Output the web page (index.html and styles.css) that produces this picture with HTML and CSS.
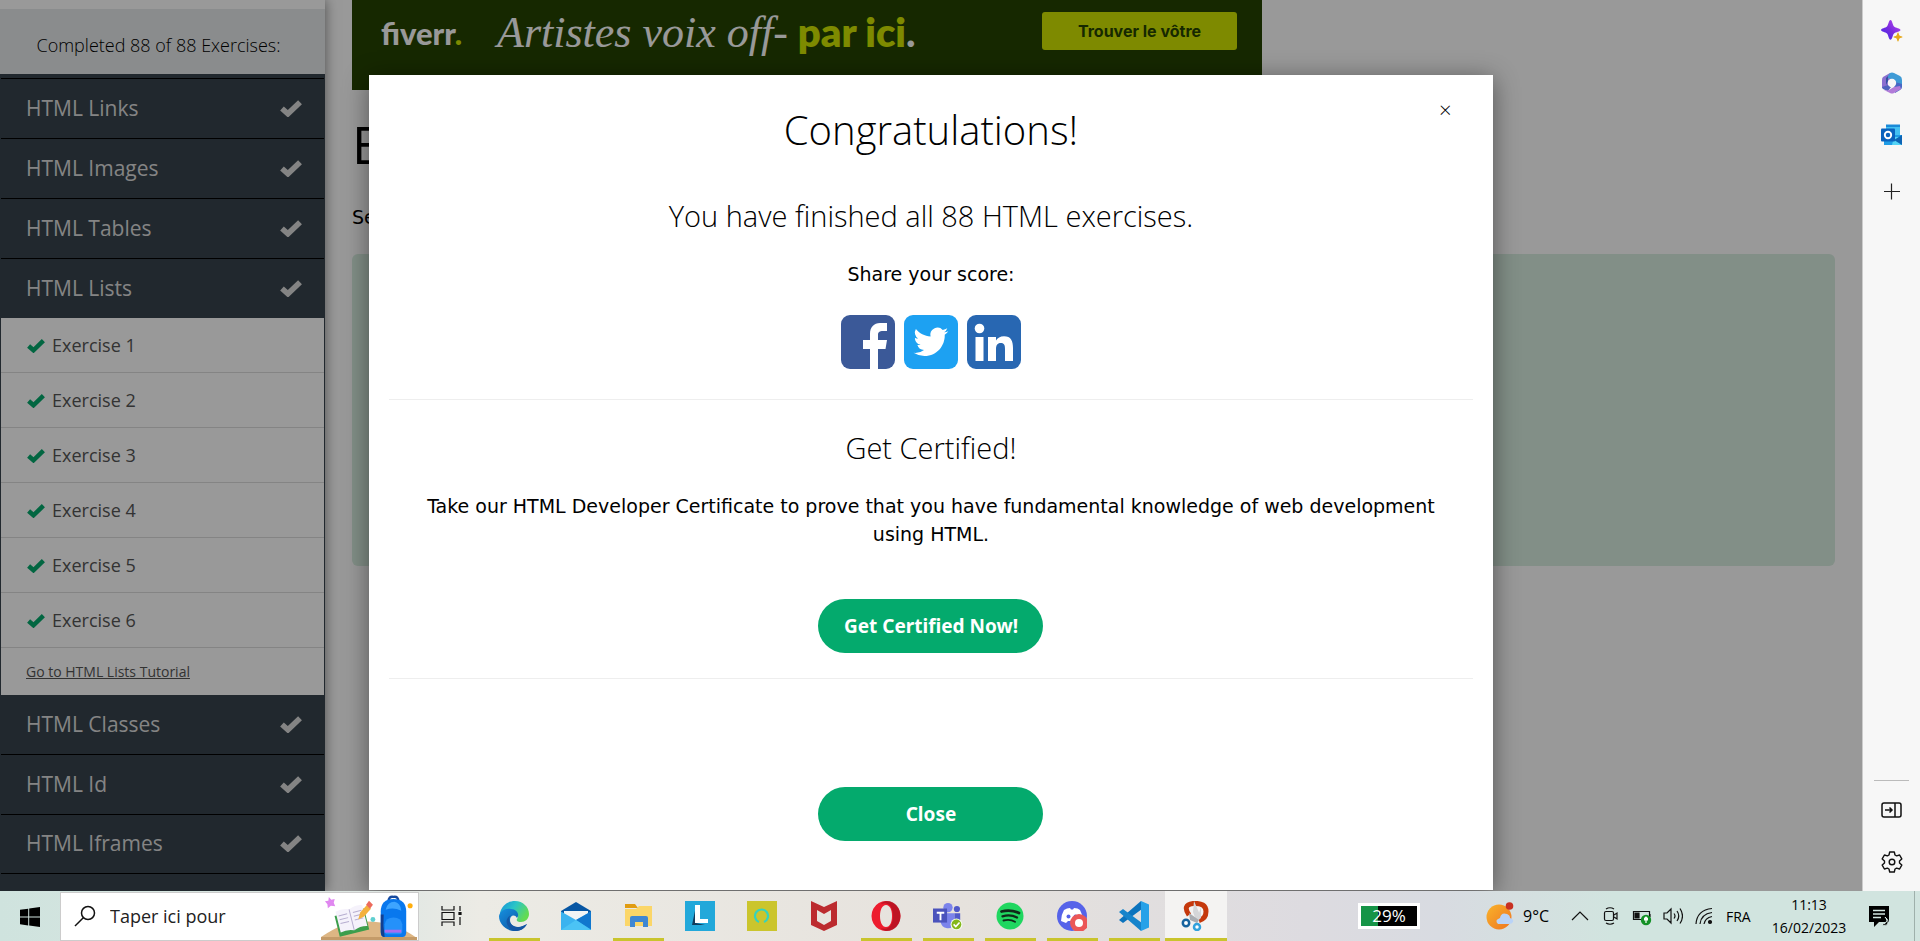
FILE: index.html
```html
<!DOCTYPE html>
<html lang="en">
<head>
<meta charset="utf-8">
<title>HTML Exercises</title>
<link rel="stylesheet" href="styles.css">
</head>
<body>
<svg class="defs" aria-hidden="true">
  <symbol id="check" viewBox="0 0 20 16"><path d="M1.800 8.500 7.200 13.300 18.200 2.700" fill="none" stroke="currentColor" stroke-width="5"/></symbol>
</svg>
<div class="browser">
  <div class="site">
    <nav class="sidebar">
      <p class="progress">Completed 88 of 88 Exercises:</p>
      <div class="topics">
        <button class="topic">HTML Links<svg class="tick"><use href="#check"/></svg></button>
        <button class="topic">HTML Images<svg class="tick"><use href="#check"/></svg></button>
        <button class="topic">HTML Tables<svg class="tick"><use href="#check"/></svg></button>
        <button class="topic">HTML Lists<svg class="tick"><use href="#check"/></svg></button>
        <div class="exercises">
          <a class="exercise" href="#"><svg class="done"><use href="#check"/></svg>Exercise 1</a>
          <a class="exercise" href="#"><svg class="done"><use href="#check"/></svg>Exercise 2</a>
          <a class="exercise" href="#"><svg class="done"><use href="#check"/></svg>Exercise 3</a>
          <a class="exercise" href="#"><svg class="done"><use href="#check"/></svg>Exercise 4</a>
          <a class="exercise" href="#"><svg class="done"><use href="#check"/></svg>Exercise 5</a>
          <a class="exercise" href="#"><svg class="done"><use href="#check"/></svg>Exercise 6</a>
          <a class="tutorial" href="#">Go to HTML Lists Tutorial</a>
        </div>
        <button class="topic">HTML Classes<svg class="tick"><use href="#check"/></svg></button>
        <button class="topic">HTML Id<svg class="tick"><use href="#check"/></svg></button>
        <button class="topic">HTML Iframes<svg class="tick"><use href="#check"/></svg></button>
      </div>
    </nav>
    <main class="content">
      <div class="ad">
        <span class="ad-logo">fiverr<b>.</b></span>
        <span class="ad-line"><i>Artistes voix off-</i><strong>par ici<b>.</b></strong></span>
        <button class="ad-button">Trouver le vôtre</button>
      </div>
      <h1 class="page-title">E</h1>
      <p class="intro">Se</p>
      <div class="panel"></div>
    </main>
    <div class="overlay">
      <section class="modal" role="dialog" aria-labelledby="dialog-title">
        <button class="dismiss" aria-label="Dismiss">×</button>
        <h2 class="modal-title" id="dialog-title">Congratulations!</h2>
        <h3 class="modal-subtitle">You have finished all 88 HTML exercises.</h3>
        <p class="modal-text">Share your score:</p>
        <div class="share">
          <a href="#" aria-label="Facebook"><svg viewBox="0 0 54 54"><rect width="54" height="54" rx="9" fill="#3b5998"/><path d="M29 54V34h-7v-9h7v-6c0-7 4-11 10-11h7v8h-4c-3.500 0-5 1-5 4v5h9l-1.500 9H37v20z" fill="#fff"/></svg></a>
          <a href="#" aria-label="Twitter"><svg viewBox="0 0 54 54"><rect width="54" height="54" rx="9" fill="#1da1f2"/><path transform="translate(9.500 9.500) scale(1.450)" fill="#fff" d="M23.950 4.570a10 10 0 0 1-2.820.77 4.960 4.960 0 0 0 2.160-2.720c-.95.55-2 .96-3.130 1.180a4.920 4.920 0 0 0-8.380 4.480C7.690 8.090 4.070 6.130 1.640 3.160a4.920 4.920 0 0 0 1.520 6.570 4.900 4.900 0 0 1-2.230-.61v.06a4.920 4.920 0 0 0 3.950 4.830 5 5 0 0 1-2.210.08 4.940 4.940 0 0 0 4.600 3.420A9.870 9.870 0 0 1 0 19.540a13.990 13.990 0 0 0 7.550 2.210c9.050 0 14-7.500 14-13.980 0-.21 0-.42-.02-.63a9.940 9.940 0 0 0 2.460-2.550z"/></svg></a>
          <a href="#" aria-label="LinkedIn"><svg viewBox="0 0 54 54"><rect width="54" height="54" rx="9" fill="#2867b2"/><g fill="#fff"><circle cx="12.500" cy="13.500" r="4.800"/><path d="M8.500 22h8v24h-8zM21 22h8v3.500c1.500-2.500 4.200-4.200 8-4.200 7 0 9 4.700 9 11.700v13h-8V34c0-3.500-.6-6-4.200-6-3.600 0-4.800 2.600-4.800 6v12h-8z"/></g></svg></a>
        </div>
        <hr class="rule">
        <h3 class="modal-subtitle certified-title">Get Certified!</h3>
        <p class="modal-text">Take our HTML Developer Certificate to prove that you have fundamental knowledge of web development using HTML.</p>
        <button class="pill certify">Get Certified Now!</button>
        <hr class="rule second">
        <button class="pill close">Close</button>
      </section>
    </div>
  </div>
  <aside class="rail">
    <button class="rail-button" aria-label="Discover"><svg viewBox="0 0 24 24"><defs><linearGradient id="star" x1="0" x2="1" y1="1" y2="0"><stop stop-color="#3c2be8"/><stop offset=".5" stop-color="#7a2bdf"/><stop offset="1" stop-color="#c04cf0"/></linearGradient></defs><path fill="url(#star)" d="M10.500 1c1.800 0 2 5 3.500 6.500s6.500 1.700 6.500 3.500-5 2-6.500 3.500-1.700 6.300-3.500 6.300-2-4.800-3.500-6.300S1 12.800 1 11s4.500-2 6-3.500S8.700 1 10.500 1z"/><path fill="#e6a91c" d="M18 13.500c.8 0 .8 2.300 1.500 3s3 .7 3 1.500-2.300.8-3 1.500-.7 3-1.500 3-.8-2.300-1.500-3-3-.7-3-1.500 2.300-.8 3-1.500.7-3 1.500-3z"/></svg></button>
    <button class="rail-button" aria-label="Microsoft 365"><svg viewBox="0 0 24 24"><path fill="#8a6fd0" d="M10 2 3 6Q2 7 2 9v8l6 3V10l5-4z"/><path fill="#3f9bd6" d="M10 2q2-1 4 0l6 3q2 1 2 4v7l-6-4-5-4-3-1V5z"/><path fill="#3552a0" d="M8 10V5L6 7v7z"/><path fill="#4867c4" d="m15 11 7 2v3q0 2-2 3l-5 3-1-6z"/><path fill="#4f63bd" d="m2 16 6-2 3 2-3 4-5-2z"/><path fill="#b17bd8" d="m4 19 4 .5L14 16l6-1 1 3-7 4q-2 1-4 0z"/><circle cx="12" cy="12" r="4.200" fill="#f7f7f7"/></svg></button>
    <button class="rail-button" aria-label="Outlook"><svg viewBox="0 0 24 24"><path fill="#1a8ad8" d="M6 1.500h14V5H6z"/><path fill="#43c0f2" d="M6 4h14v10H6z"/><path fill="#1f9ce6" d="M4 12h18v10H4z"/><path fill="#54d4f6" d="M14 14h8v8H12z"/><path fill="#0c64b5" d="m22 12-8 5 8 5z"/><rect x="1" y="5.500" width="14" height="13" rx="1" fill="#0a62bd"/><circle cx="8" cy="12" r="3.200" fill="none" stroke="#fff" stroke-width="1.900"/></svg></button>
    <button class="rail-button rail-add" aria-label="Add"><svg viewBox="0 0 24 24"><path d="M4 12.500h16M11.500 4.500v16" stroke="#222" stroke-width="1.200"/></svg></button>
    <div class="rail-foot">
      <button class="rail-button" aria-label="Hide sidebar"><svg viewBox="0 0 24 24" fill="none" stroke="#111" stroke-width="1.500"><rect x="2" y="5" width="19" height="14" rx="2"/><path d="M15 5v14M5 12h7M9.500 9.500 12 12l-2.500 2.500"/></svg></button>
      <button class="rail-button" aria-label="Settings"><svg viewBox="0 0 24 24" fill="none" stroke="#111" stroke-width="1.400" stroke-linejoin="round"><circle cx="12" cy="12" r="2.800"/><path d="m9.700 2 4.600 0 .7 3 1.600.9 3-.9 2.200 3.900-2.300 2.100v2l2.300 2.100-2.200 3.900-3-.9-1.600.9-.7 3H9.700L9 19l-1.600-.9-3 .9-2.200-3.900L4.500 13v-2L2.200 8.900 4.400 5l3 .9L9 5z"/></svg></button>
    </div>
  </aside>
</div>
<footer class="taskbar">
  <button class="start" aria-label="Start"><svg viewBox="0 0 20 20"><path d="M0 2.800 8.200 1.700V9.600H0zM9.200 1.500 20 0v9.600H9.200zM0 10.500h8.200v8L0 17.300zM9.200 10.500H20V20L9.200 18.600z"/></svg></button>
  <label class="search">
    <svg class="lens" viewBox="0 0 22 22" fill="none" stroke="#111" stroke-width="1.500"><circle cx="14" cy="8" r="6.500"/><path d="M9.300 12.700 1 21"/></svg>
    <input type="text" value="Taper ici pour" aria-label="Search">
    <svg class="school" viewBox="0 0 98 48"><path fill="#ddb684" d="M0 45C18 33 28 29 47 29s34 5 51 17v2H0z"/><path fill="#c49b69" d="M0 45h98v3H0z"/><path fill="#e088f0" d="m8 4 2.500 3L14 6l-1 4 1.500 3.500L10 13l-3 2.500-.5-4L4 8.500 7.500 8z"/><g transform="rotate(-14 33 30)"><path fill="#3c9e4c" d="M16 19h31v22H16z"/><path fill="#f5f2fb" d="M18 15q7-2 14 1 7-3 14-1v22q-7-2-14 1-7-3-14-1z"/><path stroke="#b7aed0" stroke-width="1" fill="none" d="M32 16v22M20 20h9M20 24h9M20 28h9M35 20h9M35 24h9M35 28h9"/></g><path fill="#f4b13c" d="m38 27 2-7 7-8 4 4-7 8z"/><path fill="#ec6a5c" d="m46 12 3-4 4 4-3 4z"/><circle cx="53" cy="27" r="2.500" fill="#5fcfd0"/><circle cx="91" cy="13" r="2.600" fill="#ffae0d"/><path fill="none" stroke="#174a9e" stroke-width="2.500" d="M69 9q0-6 5-5 5-1 5 5"/><path fill="#0878ee" d="M61 19q0-13 13-13t13 13v21q0 5-4 5H65q-4 0-4-5z"/><path fill="#123f91" d="M61 22v17q0 6 4 6-2-12-1-23z"/><path fill="#3da5ff" d="M66 17q2-8 9-8 6 1 7 9-8-4-16-1z"/><path fill="#2591fa" d="M65 32q1-7 9-7t9 7v7q0 3-3 3H68q-3 0-3-3z"/><path stroke="#a86df1" stroke-width="3" d="M65 39h17"/></svg>
  </label>
  <button class="app task-view" aria-label="Task view"><svg viewBox="0 0 22 22" fill="none" stroke="#111" stroke-width="1.200"><path d="M2 1v4h12V1M2 21v-4h12v4M2 7.500h12v7H2zM20 1v5M20 12v8"/><path fill="#111" d="M19 7.500h2v2h-2z"/></svg></button>
  <button class="app open" aria-label="Edge"><svg viewBox="0 0 30 30"><defs><linearGradient id="e1" x1="0" y1="0" x2="1" y2=".5"><stop stop-color="#158fdc"/><stop offset=".5" stop-color="#2bc5c7"/><stop offset="1" stop-color="#63db52"/></linearGradient><linearGradient id="e2" x1="0" y1="0" x2="1" y2="1"><stop stop-color="#1690df"/><stop offset="1" stop-color="#0b4b99"/></linearGradient></defs><path fill="url(#e1)" d="M1 12C3 4 9 0 16 0c8 0 14 6 14 13 0 5-4 8-8 8-3 0-5-1-4-3 2-2 0-7-5-7-5-1-9 0-12 4z"/><path fill="url(#e2)" d="M0 15c1-5 6-8 12-7 6 0 9 6 6 9-2-4-7-3-7 2s5 8 10 7c3-1 5-2 7-3-3 5-7 7-12 7C7 30 0 23 0 15z"/><path fill="#1456a4" d="M12 14c-4 4-1 12 7 12 4 0 7-2 9-3-4 7-10 8-15 6-6-4-8-11-1-15z"/></svg></button>
  <button class="app" aria-label="Mail"><svg viewBox="0 0 30 30"><path fill="#0756a3" d="M0 10 15 1l15 9v5H0z"/><path fill="#f1f4f5" d="M3 10h24v6L15 20 3 16z"/><path fill="#3bb3ef" d="M0 10.500 15 19l15-8.500V29H0z"/><path fill="#1177ce" d="M30 10.500v18L15 19z"/><path fill="#4bc3f5" d="m0 29 15-10 15 10z"/></svg></button>
  <button class="app open" aria-label="Files"><svg viewBox="0 0 30 30"><path fill="#e19c11" d="M2 3h10l3 4H2z"/><path fill="#fbd668" d="M2 8h11l3-3h13v20H2z"/><path fill="#3f87d2" d="M7 26V17q0-2 2-2h14q2 0 2 2v9h-5v-5h-8v5z"/></svg></button>
  <button class="app" aria-label="Lingvo"><svg viewBox="0 0 30 30"><path fill="#22a8da" d="M0 0h30v30H0z"/><path fill="#123b5c" d="m11 5-4 19h13l-9-2z"/><path fill="#fff" d="M10 4h5v14h8v4H10z"/></svg></button>
  <button class="app" aria-label="Alexa"><svg viewBox="0 0 30 30"><path fill="#cbc52d" d="M0 0h30v30H0z"/><path d="M12 21a6.500 6.500 0 1 1 5 0" fill="none" stroke="#35d3bd" stroke-width="2.200"/></svg></button>
  <button class="app" aria-label="McAfee"><svg viewBox="0 0 30 30"><path fill="#bc2b2f" fill-rule="evenodd" d="m2 0 13 6L28 0v24l-13 6-13-6zm6 9v11l7 4 7-4V9l-7 4z"/></svg></button>
  <button class="app open" aria-label="Opera"><svg viewBox="0 0 30 30"><path fill="#ed1c2e" fill-rule="evenodd" d="M15 0a14.500 15 0 1 0 .01 0zm0 4c4 0 6 5 6 11s-2 11-6 11-6-5-6-11 2-11 6-11z"/><path fill="#a90f1f" d="M10 3q2-3 6-3c8 0 13.500 7 13.500 15S24 30 16 30q-4 0-6-3 2 1 4 .800c5-.5 8-5.500 8-12.800S19 2.700 14 2.200q-2 0-4 .8z" opacity=".7"/></svg></button>
  <button class="app open" aria-label="Teams"><svg viewBox="0 0 32 30"><circle cx="16" cy="6" r="5" fill="#7b83eb"/><circle cx="25.500" cy="7.500" r="3.300" fill="#5059c9"/><path fill="#7b83eb" d="M8 12h15v10q-2 7-8 6-6-1-7-7z"/><path fill="#5059c9" d="M23 12h6v10q-2 4-6 2z"/><path fill="#4b53bc" d="M0 7h15v15H0z"/><path fill="#fff" d="M4 10.500h8v2H9v7H7v-7H4z"/><circle cx="25" cy="24" r="6.300" fill="#f6fff0"/><circle cx="25" cy="24" r="5.200" fill="#84b71b"/><path d="m22 24 2.300 2.300 4-4.300" fill="none" stroke="#fff" stroke-width="1.700"/></svg></button>
  <button class="app open" aria-label="Spotify"><svg viewBox="0 0 30 30"><circle cx="15" cy="15" r="13.500" fill="#20d760"/><g fill="none" stroke="#10291a" stroke-linecap="round"><path d="M6.500 10.500q9-2.500 17.500 1.500" stroke-width="2.800"/><path d="M7.500 15.300q8-2.200 14.500 1.200" stroke-width="2.300"/><path d="M8.500 19.500q6.500-1.700 11.500 1.200" stroke-width="1.900"/></g></svg></button>
  <button class="app open" aria-label="Discord"><svg viewBox="0 0 30 30"><circle cx="15" cy="15" r="15" fill="#5663e9"/><path fill="#fff" d="M7 9q3-2 6-2l1 1.500h2L17 7q4 0 6 2 3 5 3 11l-5 2-2-2h-8l-2 2-5-2q0-6 3-11z"/><circle cx="11.500" cy="15.500" r="2" fill="#5663e9"/><circle cx="18.500" cy="15.500" r="2" fill="#5663e9"/><circle cx="22" cy="22" r="9" fill="#eb5757"/><circle cx="22" cy="22" r="4" fill="#fff"/></svg></button>
  <button class="app open" aria-label="Code"><svg viewBox="0 0 30 30"><path fill="#0b73bd" d="m22 0 1 8L4 22l-4-3z"/><path fill="#1684cb" d="m0 11 4-3 19 14-1 8z"/><path fill="#26a1e8" d="m22 0 8 3.500v23L22 30z"/></svg></button>
  <button class="app open active" aria-label="Snipping Tool"><svg viewBox="0 0 30 30"><path d="M8 14Q1 4 12 2.500q13-1 13 8 0 7-7 9" fill="none" stroke="#c5380c" stroke-width="5"/><path fill="#d5d6d8" d="m13 0 7 16-4 6-4-11zM20 6v11l-5 4z"/><path fill="#a9adb2" d="m8 12 10 7-2 3-7-3z"/><circle cx="5" cy="22" r="3.200" fill="#fff" stroke="#17639e" stroke-width="2.500"/><circle cx="16" cy="26" r="3" fill="#fff" stroke="#31a1dc" stroke-width="2.500"/></svg></button>
  <div class="tray">
    <span class="battery"><span class="gauge">29%</span></span>
    <svg class="weather" viewBox="0 0 28 28"><defs><linearGradient id="sun" x1="0" x2="1" y1="0" y2="1"><stop stop-color="#f9b32a"/><stop offset="1" stop-color="#ee7523"/></linearGradient></defs><circle cx="13" cy="15" r="12.500" fill="url(#sun)"/><path fill="#b9d3f7" d="M12 22q-4-4 2-6 1-6 7-4 3 1 3 4 4 1 3 4-1 2-4 2z"/><circle cx="23.500" cy="4" r="3.800" fill="#c83022"/></svg>
    <span class="degrees">9°C</span>
    <svg class="mark chevron" viewBox="0 0 20 20"><path d="m2 14 8-8 8 8"/></svg>
    <svg class="mark meet" viewBox="0 0 20 20"><rect x="3.500" y="5.500" width="9" height="9" rx="1.500"/><path d="m13 9 3-2v6l-3-2M5 3q4-2.500 8 0M5 17q4 2.500 8 0"/></svg>
    <svg class="mark power" viewBox="0 0 20 20"><path d="M1.500 5.500h16v8h-16zM18 8v3"/><path fill="#111" d="M3 7h4v5H3z"/><circle cx="14" cy="14" r="5.200" fill="#139126" stroke="none"/><path d="M14 17v-3m-1.500 0q-.5-2 1.500-3 2 1 1.500 3z" fill="#fff" stroke="#fff"/></svg>
    <svg class="mark sound" viewBox="0 0 20 20"><path d="M1 7h3l4-4v14l-4-4H1zM11 7.500q2 2.500 0 5M14 5q3.500 5 0 10M17 2.500q5 7.500 0 15"/></svg>
    <svg class="mark wifi" viewBox="0 0 20 20"><path d="M2 18Q3 4 18 2.500M6 18Q7 8 18 6.500M10 18q1-6 8-7.500"/><circle cx="16" cy="16" r="1.500" fill="#111"/></svg>
    <span class="language">FRA</span>
    <time class="clock">11:13<br>16/02/2023</time>
    <svg class="notes" viewBox="0 0 20 21"><path fill="#000" d="M0 0h20v16H10l-5 5v-5H0z"/><path stroke="#d3e6e1" stroke-width="1.300" d="M4 4.500h12M4 8h12M4 11.500h8"/><path fill="#000" stroke="#d3e6e1" d="M16 11q4 4-1 7l-3-1q2 4 6 2 3-4-2-8z"/></svg>
  </div>
  <span class="show-desktop"></span>
</footer>
</body>
</html>
```

FILE: styles.css
```css
* { box-sizing: border-box; }
body {
  margin: 0;
  height: 100vh;
  display: flex;
  flex-direction: column;
  overflow: hidden;
  background: #fff;
  color: #000;
  font-family: "Open Sans", "Noto Sans", sans-serif;
}
button { font: inherit; border: 0; padding: 0; background: none; color: inherit; }
h1, h2, h3, p { margin: 0; font-weight: 400; }
.defs { display: none; }

.browser { flex: 1; min-height: 0; display: flex; }
.site { position: relative; flex: 1; min-width: 0; display: flex; overflow: hidden; }

/* Left navigation */
.sidebar {
  flex: none;
  width: 325px;
  display: flex;
  flex-direction: column;
  padding-top: 9px;
  overflow: hidden;
  box-shadow: 0 0 12px rgba(0, 0, 0, .5);
}
.progress {
  flex: none;
  height: 65px;
  line-height: 72px;
  text-align: center;
  padding-right: 8px;
  font-size: 18px;
  font-weight: 300;
  background: #e7e9eb;
}
.topics { flex: 1; min-height: 0; padding: 4px 1px 0; background: #38444d; overflow: hidden; }
.topic {
  display: flex;
  align-items: center;
  justify-content: space-between;
  width: 100%;
  height: 60px;
  padding: 0 22px 2px 25px;
  border-top: 1px solid #000;
  color: #ddd;
  font-size: 21px;
}
.exercises + .topic { height: 59px; border-top: 0; }
.topic:last-child { border-bottom: 1px solid #000; }
.tick { width: 22px; height: 18px; }
.exercises { background: #fff; }
.exercise {
  display: flex;
  align-items: center;
  gap: 7px;
  height: 55px;
  padding-left: 26px;
  border-bottom: 1px solid #ddd;
  color: #555;
  font-size: 18px;
  text-decoration: none;
}
.done { width: 18px; height: 15px; color: #04aa6d; }
.tutorial {
  display: block;
  height: 47px;
  line-height: 47px;
  padding-left: 25px;
  color: #555;
  font-size: 14px;
}

/* Page behind the dialog */
.content { flex: 1; padding: 0 27px; }
.ad {
  display: flex;
  align-items: flex-start;
  width: 910px;
  max-width: 100%;
  height: 90px;
  padding: 12px 25px 0 29px;
  background: #254300;
  color: #fff;
}
.ad-logo { width: 116px; font: 900 31px/42px Lato, sans-serif; }
.ad-logo b { color: #d3e600; }
.ad-line { display: flex; align-items: baseline; gap: 10px; white-space: nowrap; line-height: 40px; }
.ad-line i { font: italic 44px/40px "Liberation Serif", serif; }
.ad-line strong { font: 800 40px/40px Lato, sans-serif; color: #d3e600; }
.ad-line strong b { color: #fff; }
.ad-button {
  width: 195px;
  height: 38px;
  margin-left: auto;
  border-radius: 3px;
  background: #d3e600;
  color: #254300;
  font: 700 16px Inter, sans-serif;
}
.page-title { margin-top: 18px; font-size: 52px; line-height: 72px; }
.intro { margin-top: 23px; font: 19px/28px "DejaVu Sans", sans-serif; }
.panel { height: 312px; margin-top: 23px; border-radius: 6px; background: #d9eee1; }

/* Dialog */
.overlay {
  position: absolute;
  inset: 0;
  display: flex;
  justify-content: center;
  padding: 75px 0 1px;
  background: rgba(0, 0, 0, .4);
}
.modal {
  position: relative;
  width: 60.4%;
  padding: 25px 20px 0;
  background: #fff;
  box-shadow: 0 4px 24px rgba(0, 0, 0, .45);
  text-align: center;
}
.dismiss { position: absolute; top: 20px; right: 34px; width: 28px; height: 28px; font-size: 22px; font-weight: 300; line-height: 28px; }
.modal-title { font-size: 40px; font-weight: 300; line-height: 60px; }
.modal-subtitle { margin-top: 35px; font-size: 29px; font-weight: 300; line-height: 42px; }
.modal-text { margin-top: 23px; padding: 0 25px; font: 19px/28px "DejaVu Sans", sans-serif; }
.share { display: flex; justify-content: center; gap: 9px; margin: 27px 0 30px; }
.share a, .share svg { display: block; width: 54px; height: 54px; }
.rule { height: 1px; margin: 0; border: 0; background: #eee; }
.certified-title { margin-top: 27px; }
.pill {
  width: 225px;
  height: 54px;
  border-radius: 27px;
  background: #04aa6d;
  color: #fff;
  font: 700 19px "Noto Sans", sans-serif;
}
.certify { margin-top: 51px; }
.second { margin-top: 25px; }
.close { margin-top: 108px; }

/* Browser side rail */
.rail {
  flex: none;
  width: 58px;
  display: flex;
  flex-direction: column;
  align-items: center;
  gap: 28px;
  padding: 19px 0 17px;
  border-left: 1px solid #ccc;
  background: #f7f7f7;
}
.rail-button, .rail-button svg { display: block; width: 24px; height: 24px; }
.rail-add { margin-top: 4px; }
.rail-foot {
  display: flex;
  flex-direction: column;
  align-items: center;
  gap: 28px;
  width: 35px;
  margin-top: auto;
  padding-top: 17px;
  border-top: 1px solid #bbb;
}

/* Taskbar */
.taskbar {
  flex: none;
  display: flex;
  align-items: center;
  height: 50px;
  background: linear-gradient(90deg, #cfe3de 0, #dfe7e3 20%, #ecebe5 25%, #e6e2dd 50%, #dddbe0 68%, #d8dbe1 75%, #d1e4df 84%, #d1e4df 100%);
}
.start { width: 60px; height: 50px; }
.start svg { width: 20px; height: 20px; vertical-align: middle; }
.search {
  display: flex;
  align-items: center;
  width: 359px;
  height: 49px;
  padding-left: 13px;
  border: 1px solid #ccc;
  background: #fff;
}
.lens { width: 22px; height: 22px; }
.search input {
  flex: 1;
  min-width: 0;
  padding: 0 0 0 14px;
  border: 0;
  outline: 0;
  color: #222;
  font: 18px "Open Sans", sans-serif;
}
.school { width: 98px; height: 47px; }
.app { display: grid; place-items: center; width: 62px; height: 50px; border: solid transparent; border-width: 3px 0; }
.app svg { width: 30px; height: 30px; }
.task-view { width: 64px; }
.task-view svg { width: 22px; height: 22px; }
.open { background: linear-gradient(#c9c42d, #c9c42d) 50% 100% / 51px 3px no-repeat border-box; }
.active { background: linear-gradient(#c9c42d, #c9c42d) 0 100% / 100% 3px no-repeat border-box, #f4f3f2; }
.tray { flex: 1; display: flex; align-items: center; justify-content: flex-end; padding-right: 25px; }
.battery { padding: 3px; margin-right: auto; margin-left: 131px; background: #fff; }
.gauge {
  display: block;
  width: 56px;
  height: 20px;
  background: linear-gradient(90deg, #159447 30%, #000 30%);
  color: #fff;
  font-size: 17px;
  line-height: 20px;
  text-align: center;
}
.weather { width: 28px; height: 28px; margin-right: 9px; }
.degrees { width: 47px; font-size: 16px; }
.mark { width: 20px; height: 20px; margin-right: 11px; fill: none; stroke: #111; stroke-width: 1.2; }
.language { width: 45px; margin-left: 1px; font-size: 14px; }
.clock { width: 76px; font-size: 14px; line-height: 23px; text-align: center; }
.notes { width: 20px; height: 21px; margin-left: 22px; }
.show-desktop { width: 6px; height: 50px; border-left: 1px solid #9fb0ab; }
```
